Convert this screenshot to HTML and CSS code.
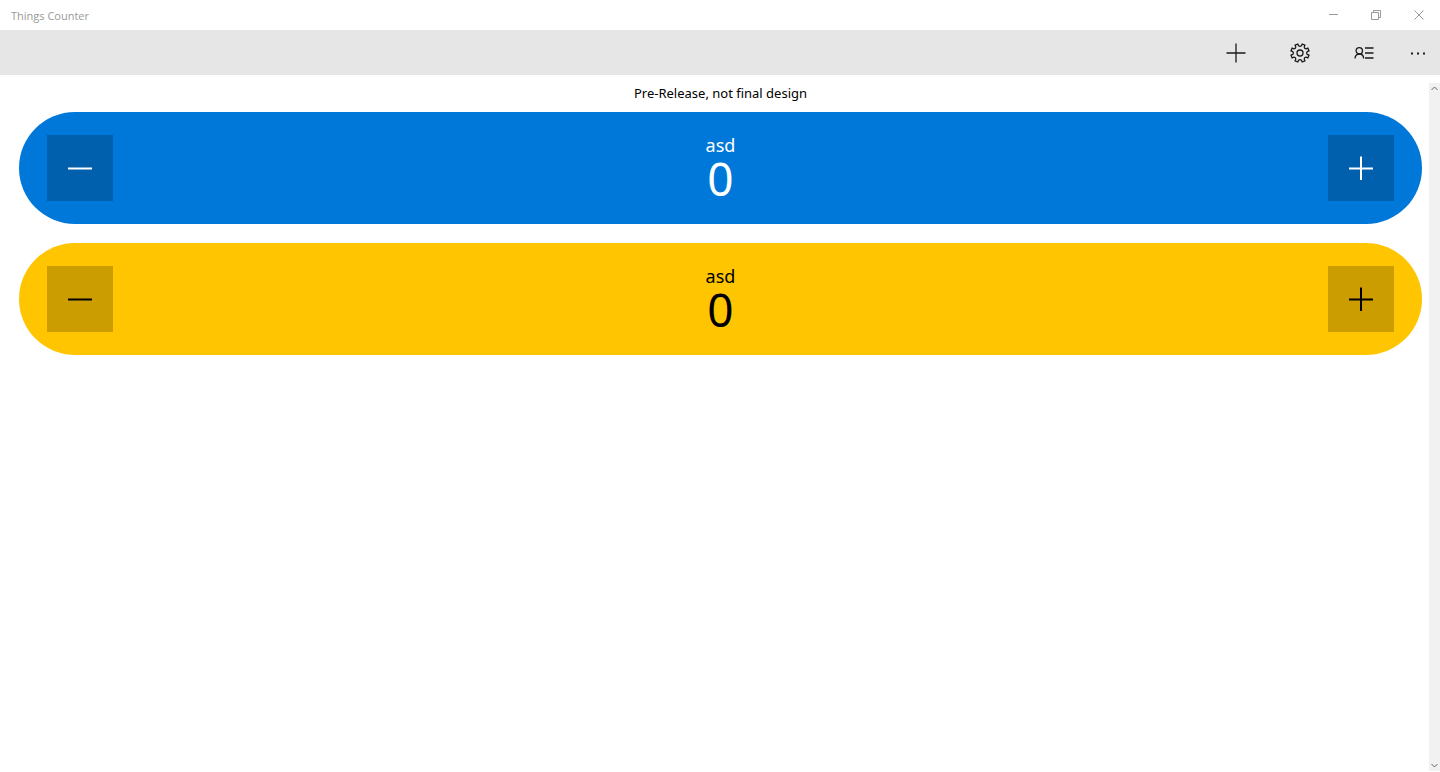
FILE: index.html
```html
<!DOCTYPE html>
<html lang="en">
<head>
  <meta charset="utf-8">
  <title>Things Counter</title>
  <link rel="stylesheet" href="styles.css">
</head>
<body>
  <header class="titlebar">
    <h1>Things Counter</h1>
    <div class="window-buttons">
      <button type="button" aria-label="Minimize">
        <svg width="10" height="10" viewBox="0 0 10 10"><path d="M1 4.500h9"/></svg>
      </button>
      <button type="button" aria-label="Restore">
        <svg width="10" height="10" viewBox="0 0 10 10"><path d="M.5 2.5h7v7h-7zM2.5 2.5v-2h7v7h-2"/></svg>
      </button>
      <button type="button" aria-label="Close">
        <svg width="10" height="10" viewBox="0 0 10 10"><path d="M.5 .5l9 9M9.5 .5l-9 9"/></svg>
      </button>
    </div>
  </header>

  <nav class="commands">
    <button type="button" aria-label="Add">
      <svg width="20" height="20" viewBox="0 0 20 20"><path d="M10 .5v19M.5 10h19"/></svg>
    </button>
    <button type="button" aria-label="Settings">
      <svg width="20" height="20" viewBox="-10 -10 20 20">
        <path d="M2.200 -9L4.900 -7.900L4.200 -6Q4.300 -4.300 6 -4.200L7.900 -4.900L9 -2.200L7.200 -1.400Q6 0 7.200 1.400L9 2.200L7.900 4.900L6 4.200Q4.300 4.300 4.200 6L4.900 7.900L2.200 9L1.400 7.200Q0 6 -1.400 7.200L-2.200 9L-4.900 7.900L-4.200 6Q-4.300 4.300 -6 4.200L-7.900 4.900L-9 2.200L-7.200 1.400Q-6 0 -7.200 -1.400L-9 -2.200L-7.900 -4.900L-6 -4.200Q-4.300 -4.300 -4.200 -6L-4.900 -7.900L-2.200 -9L-1.400 -7.200Q0 -6 1.400 -7.200Z"/>
        <circle r="3"/>
      </svg>
    </button>
    <button type="button" aria-label="Contacts">
      <svg width="20" height="20" viewBox="0 0 20 20"><circle cx="5.300" cy="7.800" r="3.200"/><path d="M1 15.500c0-2.700 1.700-4.500 4.300-4.500s4.300 1.800 4.300 4.500M11 5h8.500M11 10h8.500M11 15h8.500"/></svg>
    </button>
    <button type="button" class="more" aria-label="More">
      <svg width="16" height="16" viewBox="0 0 16 16"><path d="M1 8.500h2M7 8.500h2M13 8.500h2"/></svg>
    </button>
  </nav>

  <main class="page">
    <p class="notice">Pre-Release, not final design</p>

    <section class="counter blue">
      <button type="button" aria-label="Decrease">
        <svg width="24" height="24" viewBox="0 0 24 24"><path d="M0 12.500h24"/></svg>
      </button>
      <div class="value">
        <h2>asd</h2>
        <output>0</output>
      </div>
      <button type="button" aria-label="Increase">
        <svg width="24" height="24" viewBox="0 0 24 24"><path d="M0 12.500h24M12 .5v24"/></svg>
      </button>
    </section>

    <section class="counter yellow">
      <button type="button" aria-label="Decrease">
        <svg width="24" height="24" viewBox="0 0 24 24"><path d="M0 12.500h24"/></svg>
      </button>
      <div class="value">
        <h2>asd</h2>
        <output>0</output>
      </div>
      <button type="button" aria-label="Increase">
        <svg width="24" height="24" viewBox="0 0 24 24"><path d="M0 12.500h24M12 .5v24"/></svg>
      </button>
    </section>

    <div class="scrollbar">
      <button type="button" aria-label="Scroll up">
        <svg width="7" height="5" viewBox="0 0 7 5"><path d="M.5 4l3-3 3 3"/></svg>
      </button>
      <button type="button" aria-label="Scroll down">
        <svg width="7" height="5" viewBox="0 0 7 5"><path d="M.5 1l3 3 3-3"/></svg>
      </button>
    </div>
  </main>
</body>
</html>
```

FILE: styles.css
```css
* {
  box-sizing: border-box;
}

body {
  display: flex;
  flex-direction: column;
  min-height: 100vh;
  margin: 0;
  background-color: #fff;
  color: #000;
  font-family: "Noto Sans", "Open Sans", sans-serif;
}

button {
  display: flex;
  align-items: center;
  justify-content: center;
  padding: 0;
  border: none;
  background: none;
  color: inherit;
  cursor: pointer;
}

svg {
  fill: none;
  stroke: currentColor;
}

/* title bar */
.titlebar {
  display: flex;
  justify-content: space-between;
  height: 30px;
  padding-left: 11px;
  color: #999;
}

.titlebar h1 {
  margin: 0;
  font-family: "Open Sans", sans-serif;
  font-size: 11px;
  font-weight: normal;
  line-height: 31px;
}

.window-buttons {
  display: flex;
}

.window-buttons button {
  width: 43px;
}

/* command bar */
.commands {
  display: flex;
  justify-content: flex-end;
  height: 45px;
  background-color: #e6e6e6;
  color: #1a1a1a;
}

.commands button {
  width: 64px;
}

.commands svg {
  stroke-width: 1.3;
}

.commands .more {
  width: 44px;
}

.commands .more svg {
  stroke-width: 2;
}

/* counters */
.page {
  position: relative;
  flex: 1;
  padding: 8px 18px 0 19px;
}

.notice {
  margin: 0 0 8px;
  font-size: 13px;
  line-height: 21px;
  text-align: center;
}

.counter {
  display: flex;
  align-items: center;
  justify-content: space-between;
  margin-bottom: 19px;
  padding: 23px 28px;
  border-radius: 56px;
}

.counter button {
  width: 66px;
  height: 66px;
  background-color: rgba(0, 0, 0, 0.2);
}

.counter svg {
  stroke-width: 2;
}

.value {
  display: flex;
  flex-direction: column;
  align-items: center;
}

.value h2 {
  margin: 0;
  font-size: 18px;
  font-weight: normal;
  line-height: 20px;
}

.value output {
  font-size: 46px;
  line-height: 46px;
}

.blue {
  background-color: #0078d9;
  color: #fff;
}

.yellow {
  background-color: #ffc500;
}

/* scrollbar */
.scrollbar {
  position: absolute;
  top: 8px;
  right: 0;
  bottom: 1px;
  display: flex;
  flex-direction: column;
  justify-content: space-between;
  width: 11px;
  background-color: #f1f1f1;
  color: #666;
}

.scrollbar button {
  height: 11px;
}
```
